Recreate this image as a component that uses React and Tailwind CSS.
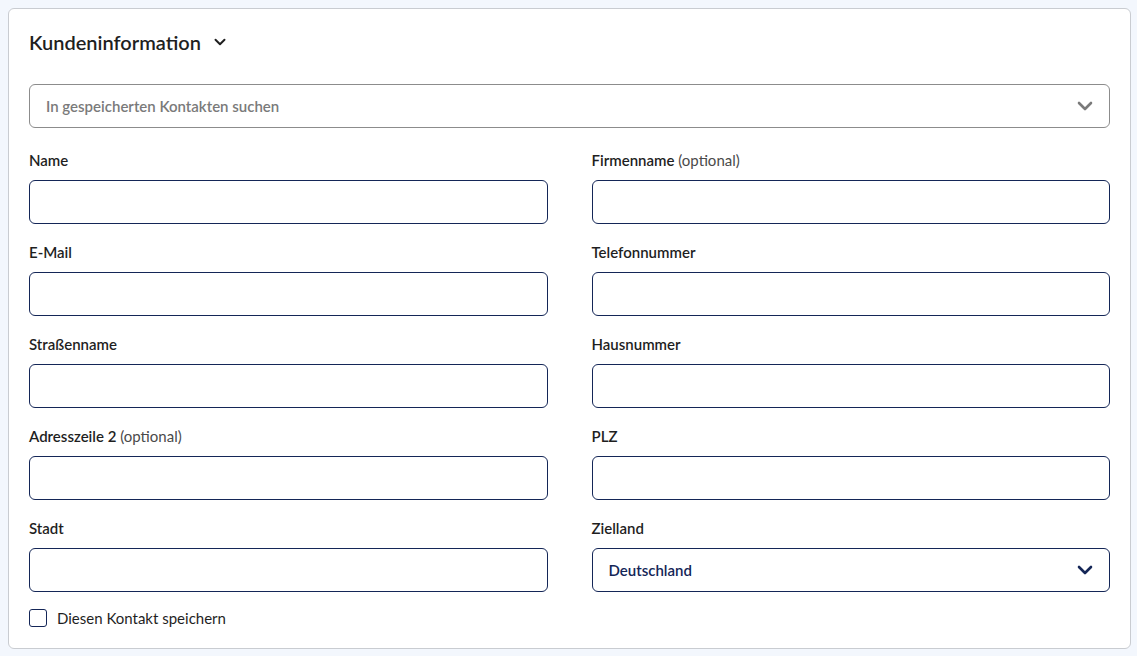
import React from "react";

const font = { fontFamily: "Lato, 'Noto Sans', sans-serif" };

function Chevron({ className }) {
  return (
    <svg viewBox="0 0 16 10" className={className} fill="none">
      <path d="M2 2l6 6 6-6" stroke="currentColor" strokeWidth="2.6" strokeLinecap="round" strokeLinejoin="round" />
    </svg>
  );
}

function Field({ label, optional }) {
  return (
    <div className="flex flex-col">
      <label className="text-[15px] leading-5 font-semibold text-[#1f1f1f]">
        {label}
        {optional && <span className="font-normal text-[#4a4a4a]"> (optional)</span>}
      </label>
      <input
        type="text"
        className="mt-2.5 h-11 rounded-md border border-[#142657] bg-white px-4 outline-none"
      />
    </div>
  );
}

export default function App() {
  return (
    <div className="min-h-screen bg-[#f3f7fd] pt-2 pl-2 pr-[6px]" style={font}>
      <div className="rounded-md border border-[#c9ccd1] bg-white px-5 pt-[19px] pb-5">
        <div className="flex h-7 items-center gap-[13px]">
          <h2 className="text-[20px] font-semibold text-[#1f1f1f]">Kundeninformation</h2>
          <Chevron className="h-2 w-3 text-[#1f1f1f]" />
        </div>

        <button className="mt-7 flex h-11 w-full items-center justify-between rounded-md border border-[#8c8c8c] px-4 text-left">
          <span className="text-[15px] font-semibold text-[#7a7a7a]">In gespeicherten Kontakten suchen</span>
          <Chevron className="h-[10px] w-4 text-[#7a7a7a]" />
        </button>

        <div className="mt-[22px] grid grid-cols-2 gap-x-11 gap-y-[18px]">
          <Field label="Name" />
          <Field label="Firmenname" optional />
          <Field label="E-Mail" />
          <Field label="Telefonnummer" />
          <Field label="Straßenname" />
          <Field label="Hausnummer" />
          <Field label="Adresszeile 2" optional />
          <Field label="PLZ" />
          <Field label="Stadt" />
          <div className="flex flex-col">
            <label className="text-[15px] leading-5 font-semibold text-[#1f1f1f]">Zielland</label>
            <div className="mt-2.5 flex h-11 items-center justify-between rounded-md border border-[#142657] px-4">
              <span className="text-[15px] font-semibold text-[#142657]">Deutschland</span>
              <Chevron className="h-[10px] w-4 text-[#142657]" />
            </div>
          </div>
        </div>

        <label className="mt-[16px] flex h-5 items-center gap-2.5">
          <span className="h-[18px] w-[18px] rounded-[3px] border-[1.5px] border-[#142657] bg-white" />
          <span className="text-[15px] leading-5 text-[#1f1f1f]">Diesen Kontakt speichern</span>
        </label>
      </div>
    </div>
  );
}
